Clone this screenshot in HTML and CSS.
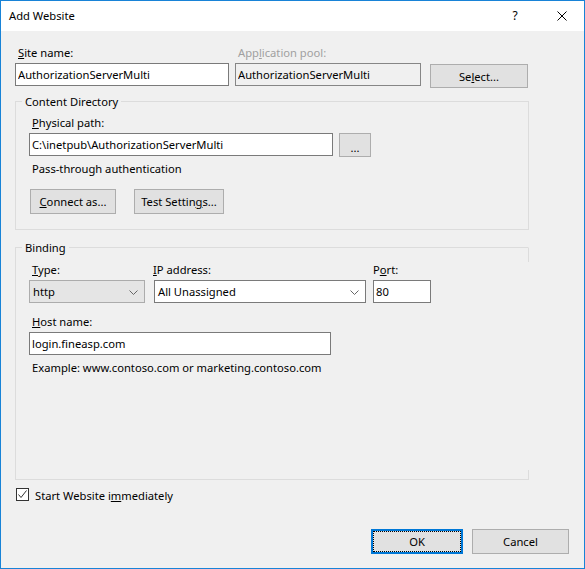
FILE: index.html
```html
<!DOCTYPE html>
<html lang="en">
<head>
    <meta charset="UTF-8">
    <title>Add Website</title>
    <link rel="stylesheet" href="styles.css">
</head>
<body>

    <div class="window">
        <div class="titlebar">
            <span class="title">Add Website</span>
            <span class="caption-btn help">?</span>
            <span class="caption-btn close">
                <svg width="10" height="10" viewBox="0 0 10 10">
                    <path d="M0.5 0.5 L9.5 9.5 M9.5 0.5 L0.5 9.5" stroke="#000" stroke-width="1" fill="none"/>
                </svg>
            </span>
        </div>

        <div class="dialog-body">
            <div class="site-row">
                <div class="field site-field">
                    <label class="lbl"><u>S</u>ite name:</label>
                    <input class="textbox" type="text" value="AuthorizationServerMulti">
                </div>
                <div class="field pool-field">
                    <label class="lbl disabled">App<u>l</u>ication pool:</label>
                    <input class="textbox readonly" type="text" value="AuthorizationServerMulti" readonly>
                </div>
                <button class="btn select-btn">Se<u>l</u>ect...</button>
            </div>

            <fieldset class="group content-dir">
                <legend>Content Directory</legend>
                <label class="lbl"><u>P</u>hysical path:</label>
                <div class="path-row">
                    <input class="textbox path-box" type="text" value="C:\inetpub\AuthorizationServerMulti">
                    <button class="btn browse-btn">...</button>
                </div>
                <div class="note">Pass-through authentication</div>
                <div class="btn-row">
                    <button class="btn connect-btn"><u>C</u>onnect as...</button>
                    <button class="btn test-btn">Test Settin<u>g</u>s...</button>
                </div>
            </fieldset>

            <fieldset class="group binding">
                <legend>Binding</legend>
                <div class="binding-row">
                    <div class="field type-field">
                        <label class="lbl"><u>T</u>ype:</label>
                        <div class="combo type-combo">
                            <span>http</span>
                            <svg width="9" height="5" viewBox="0 0 9 5"><path d="M0.5 0.5 L4.5 4.5 L8.5 0.5" stroke="#666" fill="none"/></svg>
                        </div>
                    </div>
                    <div class="field ip-field">
                        <label class="lbl"><u>I</u>P address:</label>
                        <div class="combo ip-combo">
                            <span>All Unassigned</span>
                            <svg width="9" height="5" viewBox="0 0 9 5"><path d="M0.5 0.5 L4.5 4.5 L8.5 0.5" stroke="#666" fill="none"/></svg>
                        </div>
                    </div>
                    <div class="field port-field">
                        <label class="lbl">P<u>o</u>rt:</label>
                        <input class="textbox" type="text" value="80">
                    </div>
                </div>
                <label class="lbl host-lbl"><u>H</u>ost name:</label>
                <input class="textbox host-box" type="text" value="login.fineasp.com">
                <div class="note example">Example: www.contoso.com or marketing.contoso.com</div>
            </fieldset>

            <div class="check-row">
                <span class="checkbox">
                    <svg width="11" height="11" viewBox="0 0 11 11"><path d="M1.5 5.5 L4 8.5 L9.5 1.5" stroke="#333" stroke-width="1" fill="none"/></svg>
                </span>
                <span>Start Website i<u>m</u>mediately</span>
            </div>
        </div>

        <div class="footer">
            <button class="btn ok-btn">OK</button>
            <button class="btn cancel-btn">Cancel</button>
        </div>
    </div>

</body>
</html>
```

FILE: styles.css
```css
/* Windows 10 dialog look */
body {
    margin: 0;
    font-family: 'Noto Sans', 'Open Sans', sans-serif;
    font-size: 11.2px;
    color: #000;
    background: #fff;
}

.window {
    width: 585px;
    height: 569px;
    box-sizing: border-box;
    border: 1px solid #1883d7;
    background: #f0f0f0;
    display: flex;
    flex-direction: column;
}

.titlebar {
    height: 30px;
    background: #fff;
    display: flex;
    align-items: center;
    padding-left: 8px;
}

.title { flex: 1; line-height: 28px; }

.caption-btn {
    width: 46px;
    height: 30px;
    display: flex;
    justify-content: center;
    align-items: center;
    font-size: 12px;
}

.help { padding-bottom: 1px; box-sizing: border-box; }
.close { padding-left: 2px; box-sizing: border-box; }

.dialog-body {
    flex: 1;
    display: flex;
    flex-direction: column;
    padding: 14px 55px 0 14px;
}

.lbl {
    display: block;
    line-height: 15px;
    height: 15px;
    margin: 0 0 3px 3px;
}

.lbl.disabled { color: #a0a0a0; }

.textbox {
    display: block;
    box-sizing: border-box;
    height: 23px;
    margin: 0;
    padding: 0 2px;
    border: 1px solid #7a7a7a;
    background: #fff;
    font: inherit;
    color: #000;
    outline: none;
}

.textbox.readonly {
    background: #f0f0f0;
    border-color: #868686;
}

.btn {
    box-sizing: border-box;
    height: 25px;
    margin: 0;
    padding: 0;
    background: #e1e1e1;
    border: 1px solid #adadad;
    font: inherit;
    color: #000;
}

/* top row */
.site-row {
    display: flex;
    align-items: flex-start;
}

.site-field .textbox { width: 214px; }
.pool-field { margin-left: 6px; }
.pool-field .textbox { width: 186px; }

.select-btn {
    width: 98px;
    height: 24px;
    margin: 19px 0 0 9px;
}

/* group boxes */
.group {
    margin: 0;
    padding: 0 13px;
    border: 1px solid #dcdcdc;
    min-inline-size: 0;
}

.group legend {
    padding: 0 3px;
    margin-left: -7px;
    line-height: 15px;
}

.content-dir {
    margin-top: 6px;
    padding-top: 6px;
    padding-bottom: 15px;
}

.path-row {
    display: flex;
    align-items: flex-start;
}

.path-box { width: 304px; }

.browse-btn {
    width: 32px;
    height: 24px;
    margin-left: 6px;
    line-height: 28px;
}

.note {
    line-height: 15px;
    margin: 4px 0 0 3px;
}

.btn-row {
    display: flex;
    gap: 18px;
    margin: 13px 0 0 1px;
}

.connect-btn { width: 86px; }
.test-btn { width: 90px; }

/* the right edge of this box is only drawn near its corners */
.binding {
    flex: 1;
    margin-top: 10px;
    padding-top: 7px;
    border-right-color: transparent;
    background-image: linear-gradient(#dcdcdc, #dcdcdc), linear-gradient(#dcdcdc, #dcdcdc);
    background-size: 1px 15px, 1px 10px;
    background-position: right top, right bottom;
    background-repeat: no-repeat;
    background-origin: border-box;
}

.binding-row { display: flex; }

.type-field { width: 116px; }
.ip-field { width: 212px; margin-left: 9px; }
.ip-field .lbl { margin-left: -1px; }
.port-field { width: 58px; margin-left: 7px; }
.port-field .lbl { margin-left: 0; }
.port-field .textbox { width: 58px; padding-left: 2px; }

.combo {
    box-sizing: border-box;
    height: 23px;
    display: flex;
    align-items: center;
    justify-content: space-between;
    padding: 0 6px 0 3px;
    border: 1px solid #7a7a7a;
    background: #fff;
}

.type-combo {
    background: #e5e5e5;
    border-color: #acacac;
}

.combo svg { margin-top: 1px; }

.host-lbl { margin-top: 11px; }
.host-box { width: 302px; }
.example { margin-top: 5px; }

/* checkbox */
.check-row {
    display: flex;
    align-items: flex-start;
    line-height: 15px;
    margin-top: 8px;
    margin-left: 1px;
}

.checkbox {
    box-sizing: border-box;
    width: 13px;
    height: 13px;
    border: 1px solid #333;
    background: #fff;
    margin: 0 6px 0 0;
    display: flex;
}

/* footer buttons */
.footer {
    display: flex;
    justify-content: flex-end;
    gap: 9px;
    padding: 26px 15px 14px 0;
}

.ok-btn {
    width: 92px;
    border: 2px solid #0078d7;
    outline: 1px dotted #000;
    outline-offset: -3px;
}

.cancel-btn { width: 97px; }
```
